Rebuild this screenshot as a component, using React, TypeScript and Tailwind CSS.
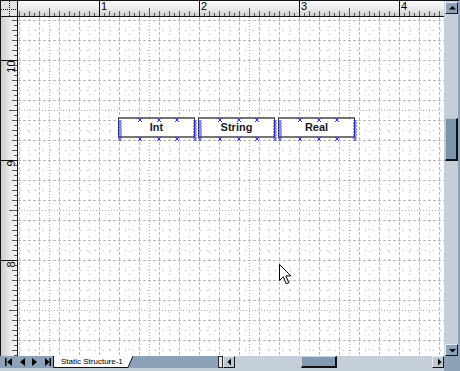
import React from "react";

function Grid() {
  const els: React.ReactNode[] = [];
  for (let x = 1; x < 426; x += 20) {
    els.push(<line key={"v" + x} x1={x + 0.5} y1={0} x2={x + 0.5} y2={339} stroke="#b9b9b9" strokeDasharray="3 2" />);
  }
  for (let x = 11; x < 426; x += 20) {
    const dense = (x - 31) % 100 === 0;
    els.push(<line key={"vm" + x} x1={x + 0.5} y1={0} x2={x + 0.5} y2={339} stroke="#b0b0b0" strokeDasharray={dense ? "1 2" : "1 6.5"} strokeDashoffset={dense ? 0 : -2} />);
  }
  for (let y = 3; y < 339; y += 20) {
    els.push(<line key={"h" + y} x1={0} y1={y + 0.5} x2={426} y2={y + 0.5} stroke="#b9b9b9" strokeDasharray="3 2" />);
  }
  for (let y = 13; y < 339; y += 20) {
    const dense = (y - 93) % 100 === 0;
    els.push(<line key={"hm" + y} x1={0} y1={y + 0.5} x2={426} y2={y + 0.5} stroke="#b0b0b0" strokeDasharray={dense ? "1 2" : "1 6.5"} strokeDashoffset={dense ? 0 : -2} />);
  }
  return (
    <svg className="absolute inset-0" width={426} height={339}>
      {els}
    </svg>
  );
}

function TopTicks() {
  const els: React.ReactNode[] = [];
  for (let px = 19; px < 444; px += 5) {
    const k = px + 1;
    const h = k % 100 === 0 ? 15 : k % 50 === 0 ? 8 : k % 10 === 0 ? 5 : 3;
    const x = px - 18 + 0.5;
    els.push(<line key={px} x1={x} y1={15 - h} x2={x} y2={15} stroke={h === 15 ? "#111" : "#555"} />);
  }
  return (
    <svg className="absolute inset-0" width={426} height={15}>
      {els}
    </svg>
  );
}

function LeftTicks() {
  const els: React.ReactNode[] = [];
  for (let py = 20; py < 356; py += 5) {
    const m = py % 100;
    const w = m === 60 ? 16 : m === 10 ? 8 : py % 10 === 0 ? 5 : 3;
    const y = py - 17 + 0.5;
    els.push(<line key={py} x1={16 - w} y1={y} x2={16} y2={y} stroke={w === 16 ? "#111" : "#555"} />);
  }
  return (
    <svg className="absolute inset-0" width={16} height={339}>
      {els}
    </svg>
  );
}

function Markers() {
  const blue = "#2b2be8";
  const els: React.ReactNode[] = [];
  const ox = 3;
  const oy = 3;
  [1, 76].forEach((cx, i) => {
    for (let y = 1; y < 20; y += 3) {
      els.push(<line key={`z${i}a${y}`} x1={ox + cx - 1.5} y1={oy + y} x2={ox + cx + 1.5} y2={oy + y + 3} stroke={blue} />);
      els.push(<line key={`z${i}b${y}`} x1={ox + cx + 1.5} y1={oy + y} x2={ox + cx - 1.5} y2={oy + y + 3} stroke={blue} />);
    }
  });
  [21, 40, 58].forEach((x) => {
    [1, 20].forEach((y) => {
      els.push(<line key={`t${x}a${y}`} x1={ox + x - 2} y1={oy + y - 2} x2={ox + x + 2} y2={oy + y + 2} stroke={blue} />);
      els.push(<line key={`t${x}b${y}`} x1={ox + x + 2} y1={oy + y - 2} x2={ox + x - 2} y2={oy + y + 2} stroke={blue} />);
    });
  });
  return (
    <svg className="absolute left-[-3px] top-[-3px]" width={83} height={27}>
      {els}
    </svg>
  );
}

function Box({ className, label }: { className: string; label: string }) {
  return (
    <div className={"absolute top-[100px] flex h-[21px] w-[77px] items-center justify-center border-x border-y-2 border-x-[#333] border-y-[#757575] bg-white text-[11px] font-bold leading-none text-[#1a1a1a] " + className}>
      <span>{label}</span>
      <Markers />
    </div>
  );
}

function Btn({ dir, className }: { dir: "up" | "down" | "left" | "right"; className: string }) {
  const pts =
    dir === "up" ? "3,5.5 6.5,2 10,5.5" : dir === "down" ? "3,3 10,3 6.5,6.5" : dir === "left" ? "7,2.5 7,9.5 3.5,6" : "5,2.5 5,9.5 8.5,6";
  const w = dir === "up" || dir === "down" ? 13 : 12;
  const h = dir === "up" || dir === "down" ? 9 : 12;
  return (
    <div className={"flex items-center justify-center border border-t-[#e4eaf0] border-l-[#e4eaf0] border-r-[#161616] border-b-[#161616] " + className}>
      <svg width={w - 2} height={h}>
        <polygon points={pts} fill="#000" />
      </svg>
    </div>
  );
}

export default function App() {
  return (
    <div className="flex h-[371px] w-[460px] flex-col overflow-hidden bg-[#c5cfda] font-['Liberation_Sans',Arial,sans-serif]">
      <div className="flex h-[356px]">
        <div className="flex w-[444px] flex-col border-l border-t border-[#141414]">
          <div className="flex h-[16px] border-b border-[#141414]">
            <div className="relative w-[17px] border-r border-[#141414] bg-[#e2e2e2]">
              <svg className="absolute inset-0" width={16} height={15}>
                <line x1={8.5} y1={0} x2={8.5} y2={15} stroke="#0000ee" strokeDasharray="1 1" />
                <line x1={0} y1={8.5} x2={16} y2={8.5} stroke="#0000ee" strokeDasharray="1 1" />
              </svg>
            </div>
            <div className="relative flex-1 bg-linear-to-b from-[#f8f8f8] via-[#ececec] to-[#cdcdcd]">
              <TopTicks />
              <span className="absolute left-[83px] top-0 text-[11px] leading-[11px] text-black">1</span>
              <span className="absolute left-[183px] top-0 text-[11px] leading-[11px] text-black">2</span>
              <span className="absolute left-[283px] top-0 text-[11px] leading-[11px] text-black">3</span>
              <span className="absolute left-[383px] top-0 text-[11px] leading-[11px] text-black">4</span>
            </div>
          </div>
          <div className="flex flex-1">
            <div className="relative w-[17px] border-r border-[#141414] bg-linear-to-r from-[#cdcdcd] via-[#e6e6e6] to-[#f6f6f6]">
              <LeftTicks />
              <span className="absolute left-[4px] top-[44px] -rotate-90 text-[11px] leading-[11px] text-black">10</span>
              <span className="absolute left-[7px] top-[141px] -rotate-90 text-[11px] leading-[11px] text-black">9</span>
              <span className="absolute left-[7px] top-[242px] -rotate-90 text-[11px] leading-[11px] text-black">8</span>
            </div>
            <div className="relative h-[339px] w-[426px] overflow-hidden bg-white">
              <Grid />
              <Box className="left-[100px]" label="Int" />
              <Box className="left-[180px]" label="String" />
              <Box className="left-[260px]" label="Real" />
              <svg className="absolute left-[261px] top-[247px]" width={14} height={22}>
                <path d="M0.5 0.5 V16.5 L4.3 12.8 L7.3 19.8 L9.8 18.8 L6.9 11.9 H11.8 Z" fill="#fff" stroke="#000" strokeLinejoin="miter" />
              </svg>
            </div>
          </div>
        </div>
        <div className="flex w-[16px] flex-col border-r-2 border-t border-r-[#8da1b9] border-t-[#141414]">
          <Btn dir="up" className="ml-[1px] mt-[1px] h-[12px] w-[13px] bg-[#8da1b9]" />
          <div className="ml-[1px] mt-[104px] h-[43px] w-[13px] border-b-2 border-l border-r-2 border-t border-b-[#101010] border-l-[#b8c6d4] border-r-[#101010] border-t-[#b8c6d4] bg-[#7c93ad]" />
          <div className="flex-1" />
          <Btn dir="down" className="ml-[1px] h-[12px] w-[13px] bg-[#8da1b9]" />
        </div>
      </div>
      <div className="flex h-[15px]">
        <div className="h-[12px] w-[53px] bg-[#8da1b9]">
          <svg width={53} height={12}>
            <rect x={5} y={2} width={1.5} height={8} fill="#000" />
            <polygon points="12,2 7,6 12,10" fill="#000" />
            <polygon points="25,2 20,6 25,10" fill="#000" />
            <polygon points="32,2 37,6 32,10" fill="#000" />
            <polygon points="45,2 49.5,6 45,10" fill="#000" />
            <rect x={49.5} y={2} width={1.5} height={8} fill="#000" />
          </svg>
        </div>
        <div className="relative h-[12px] w-[80px] bg-[#8da1b9]">
          <svg className="absolute inset-0" width={80} height={12}>
            <polygon points="0,0 80,0 75,11.5 0,11.5" fill="#fbfbfb" />
            <polyline points="0.5,0 0.5,11.5 75,11.5 80,0" fill="none" stroke="#111" />
          </svg>
          <span className="relative block pl-[8px] text-[8px] leading-[12px] text-black">Static Structure-1</span>
        </div>
        <div className="h-[12px] w-[85px] bg-[#8da1b9]" />
        <div className="h-[12px] w-[5px] border border-[#2a2a2a] bg-[#dfe5ec]" />
        <Btn dir="left" className="h-[12px] w-[12px] bg-[#bcc8d5]" />
        <div className="flex h-[12px] flex-1 bg-[#c5cfda]">
          <div className="ml-[66px] h-[12px] w-[36px] border-b-2 border-l border-r-2 border-t border-b-[#101010] border-l-[#c8d4e0] border-r-[#101010] border-t-[#c8d4e0] bg-[#8399b2]" />
        </div>
        <Btn dir="right" className="h-[12px] w-[12px] bg-[#bcc8d5]" />
        <div className="h-[15px] w-[16px] bg-[#8da1b9]" />
      </div>
    </div>
  );
}
